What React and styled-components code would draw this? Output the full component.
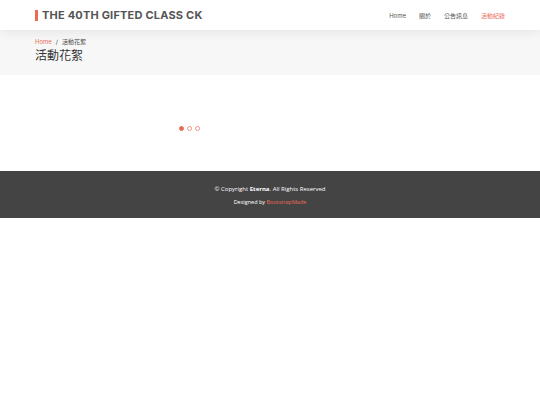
import React from 'react';
import styled, { createGlobalStyle } from 'styled-components';

const GlobalStyle = createGlobalStyle`
  html, body {
    margin: 0;
    padding: 0;
    background: #fff;
    font-family: "Open Sans", "Noto Sans CJK TC", sans-serif;
    color: #444;
  }
`;

const Header = styled.header`
  height: 30px;
  background: #fff;
  box-shadow: 0 2px 12px rgba(0, 0, 0, 0.08);
  position: relative;
  z-index: 2;
`;

const Container = styled.div`
  width: 470px;
  margin: 0 auto;
  display: flex;
  align-items: center;
  height: 100%;
`;

const Logo = styled.h1`
  margin: 0;
  flex: 1;
  display: flex;
  align-items: center;
  font-family: "Inter", "Noto Sans CJK TC", sans-serif;
  font-size: 11px;
  font-weight: 700;
  letter-spacing: 0.2px;
  color: #545454;
  border-left: 3px solid #e96b56;
  padding-left: 4px;
  line-height: 11px;
`;

const Nav = styled.nav`
  display: flex;
  align-items: baseline;
  gap: 13px;
  padding-top: 1px;
`;

const NavLink = styled.span`
  font-family: "Inter", "Noto Sans CJK TC", sans-serif;
  font-size: 6px;
  line-height: 8px;
  font-weight: 400;
  color: ${(p) => (p.$active ? '#e96b56' : '#545454')};
  cursor: pointer;
`;

const Breadcrumbs = styled.section`
  background: #f7f7f7;
  height: 45px;
  box-sizing: border-box;
  padding-top: 8px;
`;

const CrumbInner = styled.div`
  width: 470px;
  margin: 0 auto;
`;

const CrumbList = styled.ol`
  list-style: none;
  margin: 0;
  padding: 0;
  display: flex;
  align-items: baseline;
  gap: 4px;
  font-family: "Inter", "Noto Sans CJK TC", sans-serif;
  font-size: 6px;
  color: #444;
  line-height: 8px;
`;

const Crumb = styled.li`
  color: ${(p) => (p.$link ? '#e96b56' : '#444')};
`;

const PageTitle = styled.h2`
  margin: 1px 0 0;
  font-family: "Noto Sans CJK TC", sans-serif;
  font-size: 12px;
  font-weight: 400;
  color: #333;
  line-height: 16px;
`;

const Main = styled.main`
  height: 96px;
  display: flex;
  flex-direction: column;
`;

const Slider = styled.div`
  width: 470px;
  margin: 0 auto;
  padding-top: 51px;
`;

const Dots = styled.div`
  display: flex;
  gap: 3px;
  padding-left: 144px;
`;

const Dot = styled.span`
  width: 5px;
  height: 5px;
  border-radius: 50%;
  box-sizing: border-box;
  border: 1px solid #e96b56;
  background: ${(p) => (p.$active ? '#e96b56' : '#fff')};
  opacity: ${(p) => (p.$active ? 1 : 0.7)};
`;

const Footer = styled.footer`
  background: #444;
  height: 47px;
  box-sizing: border-box;
  padding-top: 14px;
  display: flex;
  flex-direction: column;
  align-items: center;
  gap: 5px;
  font-size: 6px;
  color: #fff;
  line-height: 8px;
`;

const Copy = styled.div``;

const Credits = styled.div`
  font-size: 5.5px;
  a {
    color: #e96b56;
    text-decoration: none;
  }
`;

export default function App() {
  return (
    <>
      <GlobalStyle />
      <Header>
        <Container>
          <Logo>THE 40TH GIFTED CLASS CK</Logo>
          <Nav>
            <NavLink>Home</NavLink>
            <NavLink>關於</NavLink>
            <NavLink>公告訊息</NavLink>
            <NavLink $active>活動紀錄</NavLink>
          </Nav>
        </Container>
      </Header>
      <Breadcrumbs>
        <CrumbInner>
          <CrumbList>
            <Crumb $link>Home</Crumb>
            <Crumb>/</Crumb>
            <Crumb>活動花絮</Crumb>
          </CrumbList>
          <PageTitle>活動花絮</PageTitle>
        </CrumbInner>
      </Breadcrumbs>
      <Main>
        <Slider>
          <Dots>
            <Dot $active />
            <Dot />
            <Dot />
          </Dots>
        </Slider>
      </Main>
      <Footer>
        <Copy>
          © Copyright <strong>Eterna</strong>. All Rights Reserved
        </Copy>
        <Credits>
          Designed by <a>BootstrapMade</a>
        </Credits>
      </Footer>
    </>
  );
}
